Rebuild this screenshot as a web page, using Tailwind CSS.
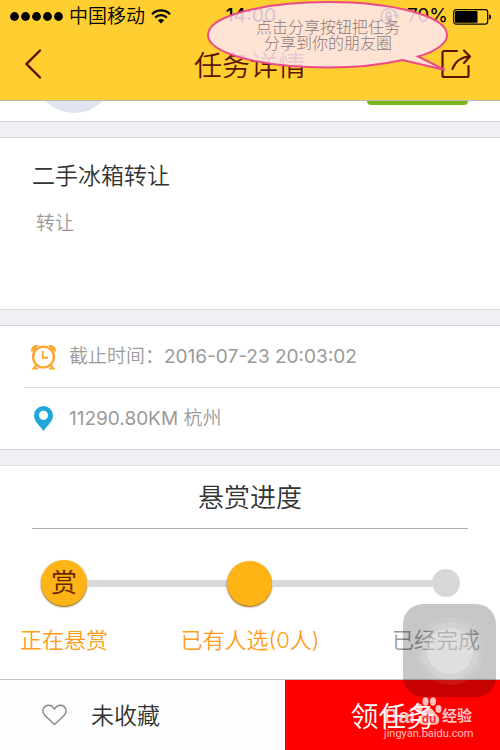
<!DOCTYPE html>
<html lang="zh-CN">
<head>
  <meta charset="UTF-8" />
  <meta name="viewport" content="width=device-width, initial-scale=1.0"/>
  <title>任务详情</title>
  <script src="https://cdn.jsdelivr.net/npm/@tailwindcss/browser@4"></script>
</head>
<body class="bg-[#efeff4] text-[#333] font-['Inter','Noto_Sans_CJK_SC',sans-serif] font-[350]">
<div class="relative min-h-screen flex flex-col overflow-hidden">

  <!-- Header -->
  <header class="h-[101px] bg-[#ffcf32] border-b border-[#bdb9ae]">
    <div class="flex items-center h-[33px] pl-[10px] pr-2 text-[19px] font-normal text-black">
      <div class="flex flex-1 items-center">
        <svg class="w-[53px] h-[9px]" viewBox="0 0 53 9">
          <circle cx="4.5" cy="4.5" r="4.4"/><circle cx="15.5" cy="4.5" r="4.4"/><circle cx="26.5" cy="4.5" r="4.4"/><circle cx="37.5" cy="4.5" r="4.4"/><circle cx="48.5" cy="4.5" r="4.4"/>
        </svg>
        <span class="ml-[6px] pt-[2px] font-[350]">中国移动</span>
        <svg class="w-5 h-[15px] ml-[6px]" viewBox="0 0 20 15" fill="none" stroke="#000" stroke-width="2.2">
          <path d="M1 5.2C6 .2 14 .2 19 5.2M4.2 8.6c3.3-3.2 8.3-3.2 11.6 0"/>
          <path d="M10 14.4 6.8 11.3c1.8-1.7 4.6-1.7 6.4 0z" fill="#000" stroke="none"/>
        </svg>
      </div>
      <span class="font-medium">14:00</span>
      <div class="flex flex-1 items-center justify-end">
        <svg class="w-5 h-5 mr-2" viewBox="0 0 20 20" fill="none" stroke="#000" stroke-width="1.5">
          <path d="M15 15.2A7.7 7.7 0 1 1 17.6 9M14.8 7.6l2.8 2.8 2.2-3.2"/>
          <rect x="6.3" y="8.8" width="6.4" height="5" fill="#000" stroke="none"/>
          <path d="M7.5 9V7a2 2 0 0 1 4 0v2"/>
        </svg>
        <span>70%</span>
        <svg class="w-[39px] h-4 ml-[5px]" viewBox="0 0 39 16">
          <rect x=".7" y=".7" width="34" height="14.4" rx="2.5" fill="none" stroke="#000" stroke-width="1.2"/>
          <rect x="2" y="2" width="22.5" height="11.8" rx="1"/>
          <path d="M36.2 5.2c2.6.6 2.6 4.8 0 5.4z"/>
        </svg>
      </div>
    </div>
    <div class="flex items-center justify-between h-[62px] pl-6 pr-7 text-[#5a1500]">
      <button type="button" aria-label="返回" class="w-9">
        <svg class="w-[18px] h-[30px]" viewBox="0 0 18 30" fill="none" stroke="#5a1500" stroke-width="2.4" stroke-linecap="round"><path d="M16 1.5 2.5 15 16 28.5"/></svg>
      </button>
      <h1 class="pt-1 text-[28px] leading-8">任务详情</h1>
      <button type="button" aria-label="分享" class="w-8">
        <svg class="w-8 h-8" viewBox="0 0 32 32" fill="none" stroke="#5a1500" stroke-width="2.2" stroke-linecap="round" stroke-linejoin="round">
          <path d="M17 3H4A1.5 1.5 0 0 0 2.500 4.500v23A1.500 1.500 0 0 0 4 29h23a1.500 1.500 0 0 0 1.500-1.500V18"/>
          <path d="M12.500 21C15 14 20 9 30 8.500M24 2.500l6 6-6 6.500"/>
        </svg>
      </button>
    </div>
  </header>

  <main>
    <!-- Publisher row, scrolled under the header -->
    <section class="relative h-[21px] overflow-hidden bg-white border-b border-[#d3d3d6]">
      <div class="absolute left-[34px] bottom-2 size-20 rounded-full bg-[#e0e4f1]"></div>
      <div class="absolute right-8 bottom-4 w-[101px] h-8 rounded bg-[#7bb51c]"></div>
    </section>

    <!-- Task -->
    <section class="mt-[15px] h-[173px] px-8 pt-[22px] bg-white border-y border-[#d9d9dc]">
      <h2 class="text-[23px] leading-8">二手冰箱转让</h2>
      <p class="mt-[18px] pl-1 text-[19px] leading-7 text-[#999]">转让</p>
    </section>

    <!-- Deadline and place -->
    <section class="mt-[15px] pl-6 bg-white border-y border-[#d3d3d6] text-[19px] text-[#999]">
      <div class="flex items-center h-[62px] pl-[6px] border-b border-[#e0e0e0]">
        <svg class="w-7 h-7 mr-[11px]" viewBox="0 0 28 28" fill="none" stroke="#fca72d" stroke-width="2.4">
          <circle cx="13.500" cy="14" r="10.400"/>
          <path d="M12.800 8v6.800h5.400" stroke-width="2"/>
          <path d="M6.500 21.500 3.500 25.400H8M20.500 21.500l3 3.900H19" stroke-width="2"/>
          <path d="M1.800 9.500C-.5 5 4 .500 8.800 2.300zM25.200 9.500C27.500 5 23 .500 18.200 2.300z" fill="#fca72d" stroke="none"/>
        </svg>
        <span class="pt-[2px]">截止时间：<span class="font-normal">2016-07-23 20:03:02</span></span>
      </div>
      <div class="flex items-center h-[61px] pl-[6px]">
        <svg class="w-7 h-7 mr-[11px]" viewBox="0 0 28 28">
          <path fill="#20a8da" fill-rule="evenodd" d="M13.500 1a9.500 9.500 0 0 0-9.500 9.500c0 5.500 5 9.500 9.500 15.500 4.500-6 9.500-10 9.500-15.500A9.500 9.500 0 0 0 13.500 1zm0 4.700a4.600 4.600 0 1 1 0 9.200 4.600 4.600 0 0 1 0-9.200z"/>
        </svg>
        <span class="pt-[2px]"><span class="font-normal">11290.80KM</span> 杭州</span>
      </div>
    </section>

    <!-- Progress -->
    <section class="mt-[15px] h-[214px] bg-white border-t border-[#dedee1]">
      <h2 class="mx-8 h-[63px] pt-[14px] border-b border-[#aaa] text-center text-[26px] leading-9">悬赏进度</h2>
      <div class="flex items-center mt-[31px] pl-[41px] pr-10">
        <div class="flex items-center justify-center size-[46px] rounded-full bg-[#ffb416] shadow-[0_1px_2px_#795000] text-[26px] leading-8 text-[#6b2500] font-normal">赏</div>
        <div class="flex-[7] h-[7px] bg-[#d8d8d8]"></div>
        <div class="size-[45px] rounded-full bg-[#ffb416] shadow-[0_1px_2px_#795000]"></div>
        <div class="flex-[8] h-[7px] bg-[#d8d8d8]"></div>
        <div class="size-7 rounded-full bg-[#d8d8d8]"></div>
      </div>
      <div class="flex justify-between mt-[18px] px-5 text-[22px] leading-8 text-[#ff9c1a]">
        <span>正在悬赏</span>
        <span>已有人选(0人)</span>
        <span class="text-[#999]">已经完成</span>
      </div>
    </section>
  </main>

  <!-- Actions -->
  <footer class="flex h-[71px] border-t border-[#c5c5c5]">
    <button type="button" class="flex items-center w-[57%] pl-[42px] bg-[#fdfdfd] text-[23px]">
      <svg class="w-[25px] h-[22px] mr-6" viewBox="0 0 25 22" fill="none" stroke="#888" stroke-width="1.4" stroke-linejoin="round">
        <path d="M12.500 20.500 2.500 11C-1 6.500 2 1.200 6.500 1.200c3 0 4.700 1.500 6 4 1.300-2.500 3-4 6-4 4.500 0 7.500 5.300 4 9.800z"/>
      </svg>
      <span class="pt-[2px]">未收藏</span>
    </button>
    <button type="button" class="flex-1 pt-1 bg-[#f00] text-[28px] text-white">领任务</button>
  </footer>

  <!-- Share hint -->
  <div class="absolute top-px right-[50px] w-[244px] h-[74px]">
    <svg class="absolute inset-0 w-[244px] h-[74px]" viewBox="0 0 244 74">
      <path d="M212 55.500C231 50 241 42 241 34 241 15.500 188 1 122 1S2 15.500 2 34s54 32.500 120 32.500c28 0 55-3 74.500-7.500L239 69z" fill="#ffe8f3" fill-opacity=".85" stroke="#ec4c86" stroke-width="2"/>
    </svg>
    <p class="relative pt-[17px] text-center text-[16px] leading-4 text-[#8c7a76] font-['Noto_Sans_CJK_SC',sans-serif] font-light">点击分享按钮把任务<br>分享到你的朋友圈</p>
  </div>

  <!-- Floating touch button -->
  <button type="button" aria-label="辅助触控" class="absolute right-1 bottom-[53px] flex items-center justify-center size-[93px] rounded-[20px] bg-black/22">
    <span class="flex items-center justify-center size-[68px] rounded-full bg-white/8">
      <span class="flex items-center justify-center size-[58px] rounded-full bg-white/15">
        <span class="size-[46px] rounded-full bg-white/30"></span>
      </span>
    </span>
  </button>

  <!-- Watermark -->
  <div class="absolute right-7 bottom-[10px] w-[88px] text-white/75 font-['Liberation_Sans','Noto_Sans_CJK_SC',sans-serif]">
    <div class="flex items-end justify-between h-[34px]">
      <span class="text-[20px] leading-6 font-bold">Bai</span>
      <svg class="w-[26px] h-[29px] mb-[2px]" viewBox="0 0 26 29" fill="#fff" fill-opacity=".75">
        <ellipse cx="3.500" cy="11" rx="3" ry="4"/><ellipse cx="9.500" cy="4.500" rx="3" ry="4.200"/><ellipse cx="17" cy="4.500" rx="3" ry="4.200"/><ellipse cx="22.500" cy="12" rx="3" ry="4"/>
        <path d="M13 11c3 0 4.500 3 6.500 5.500 2.500 2.700 4.500 5 3.500 8-1.500 4.500-6 3.200-10 3.200s-8.500 1.300-10-3.200c-1-3 1-5.300 3.500-8C8.500 14 10 11 13 11z"/>
        <text x="13" y="25.500" text-anchor="middle" font-size="12" font-weight="bold" fill="#f33" fill-opacity="1">du</text>
      </svg>
      <span class="text-[15px] leading-6 font-bold">经验</span>
    </div>
    <div class="text-[11px] leading-3 font-['Roboto',sans-serif] font-normal">jingyan.baidu.com</div>
  </div>

</div>
</body>
</html>
